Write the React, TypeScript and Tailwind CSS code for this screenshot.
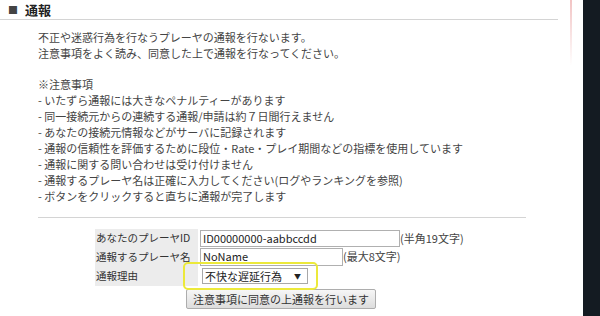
import React from "react";

const notes = [
  "- いたずら通報には大きなペナルティーがあります",
  "- 同一接続元からの連続する通報/申請は約７日間行えません",
  "- あなたの接続元情報などがサーバに記録されます",
  "- 通報の信頼性を評価するために段位・Rate・プレイ期間などの指標を使用しています",
  "- 通報に関する問い合わせは受け付けません",
  "- 通報するプレーヤ名は正確に入力してください(ログやランキングを参照)",
  "- ボタンをクリックすると直ちに通報が完了します",
];

const font = {
  fontFamily: '"Noto Sans CJK JP", "Noto Sans", sans-serif',
};

export default function App() {
  return (
    <div className="w-[600px] h-[316px] bg-white flex overflow-hidden" style={font}>
      <div className="w-[570px] relative">
        <div className="w-[558px] h-[20px] border-b border-[#d4d4d4] flex items-center pl-[8px] gap-[7px]">
          <span className="text-[10px] text-[#444] leading-none">■</span>
          <span className="text-[13px] font-bold text-[#222] leading-none">通報</span>
        </div>
        <div className="pl-[38px] pt-[9px] text-[11px] leading-[16px] text-[#444] whitespace-pre">
          <p>不正や迷惑行為を行なうプレーヤの通報を行ないます。</p>
          <p>注意事項をよく読み、同意した上で通報を行なってください。</p>
          <p className="h-[15px]"></p>
          <p>※注意事項</p>
          {notes.map((n) => (
            <p key={n}>{n}</p>
          ))}
        </div>
        <div className="ml-[38px] w-[488px] mt-[13px] border-t border-[#d4d4d4]"></div>
        <div className="ml-[95px] mt-[11px] w-[372px] text-[11px] text-[#333] whitespace-nowrap">
          <div className="flex h-[18px] items-center">
            <div className="w-[103px] h-full bg-[#ececec] flex items-center pl-[1px] text-[10.5px]">あなたのプレーヤID</div>
            <div className="ml-[2px] w-[200px] h-[17px] border border-[#b0b0b0] flex items-center pl-[2px] text-[#222]">
              ID00000000-aabbccdd
            </div>
            <span className="text-[#444]">(半角19文字)</span>
          </div>
          <div className="flex h-[19px] items-center">
            <div className="w-[103px] h-full bg-[#ececec] flex items-center pl-[1px] text-[10.5px]">通報するプレーヤ名</div>
            <div className="ml-[2px] w-[143px] h-[18px] border border-[#b0b0b0] flex items-center pl-[2px] text-[#222]">
              NoName
            </div>
            <span className="text-[#444]">(最大8文字)</span>
          </div>
          <div className="flex h-[20px] items-center">
            <div className="w-[103px] h-full bg-[#ececec] flex items-center pl-[1px] text-[10.5px]">通報理由</div>
            <div className="ml-[4px] w-[106px] h-[16px] border border-[#a8a8a8] flex items-center justify-between pl-[2px] pr-[6px] text-[#222]">
              <span>不快な遅延行為</span>
              <span className="text-[7px]">▼</span>
            </div>
          </div>
          <div className="flex justify-center mt-[3px]">
            <button className="w-[190px] h-[20px] border border-[#adadad] rounded-[2px] bg-gradient-to-b from-[#f6f6f6] to-[#dddddd] text-[11px] text-[#333] flex items-center justify-center">
              注意事項に同意の上通報を行います
            </button>
          </div>
        </div>
        <div className="absolute left-[183px] top-[262px] w-[135px] h-[28px] border-2 border-[#ece93a] rounded-[5px]"></div>
      </div>
      <div className="w-[2px] h-[66px] bg-gradient-to-b from-[#f2c4c4] to-transparent"></div>
      <div className="flex-1"></div>
      <div className="w-[17px] h-[316px] bg-[#141b22]"></div>
    </div>
  );
}
